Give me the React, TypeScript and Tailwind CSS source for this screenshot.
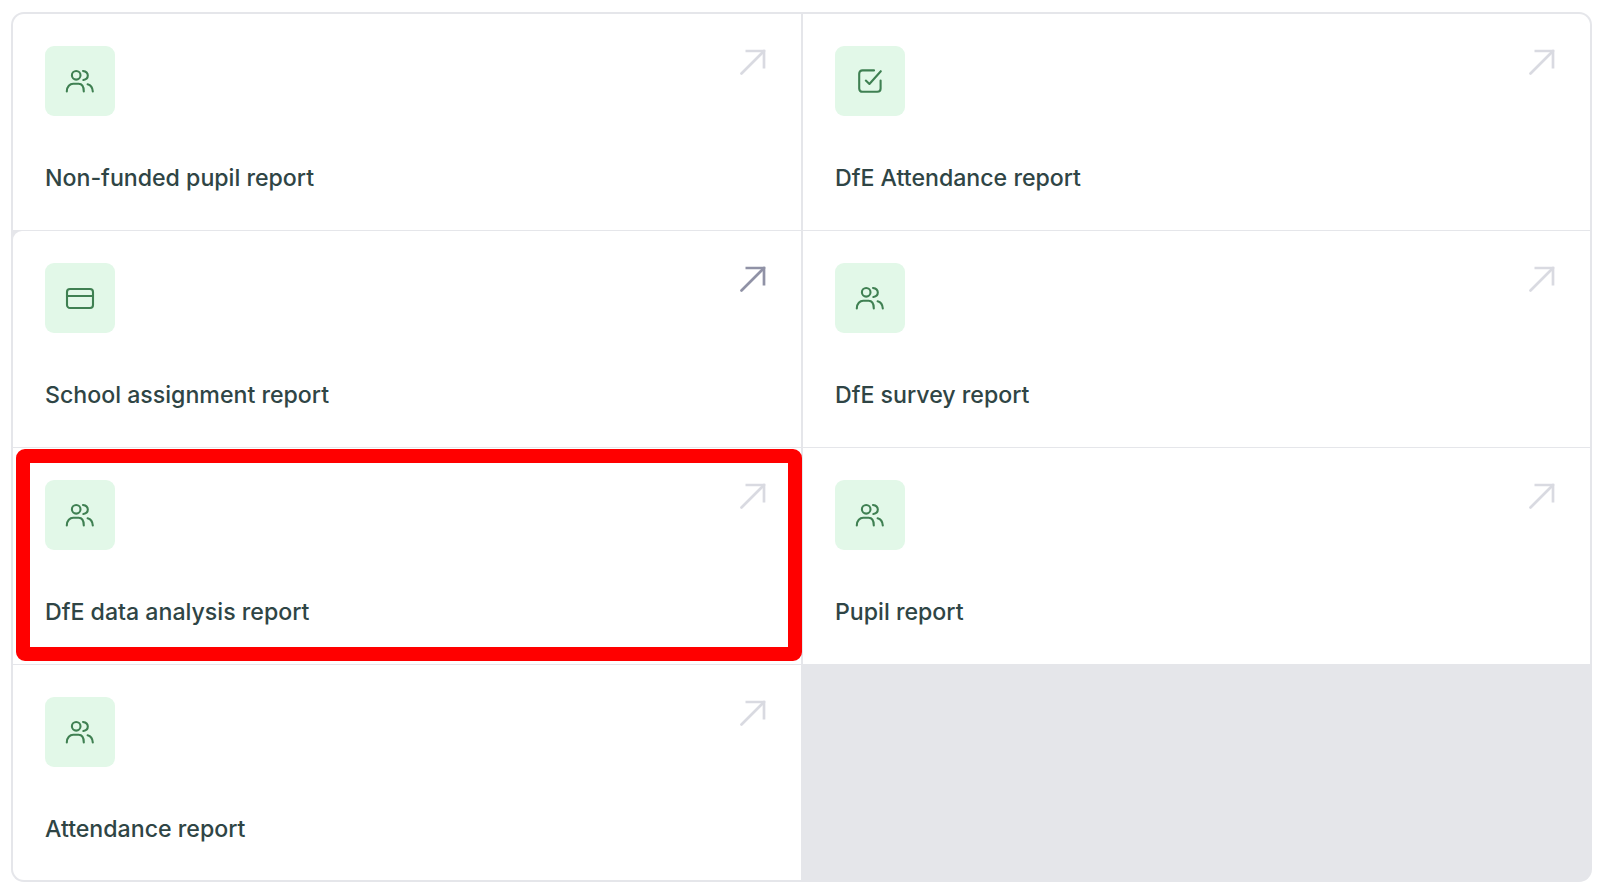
type IconName = "users" | "check" | "card";

type Report = {
  title: string;
  icon: IconName;
  hovered?: boolean;
  corner?: string;
  height?: string;
};

const REPORTS: Report[] = [
  { title: "Non-funded pupil report", icon: "users", corner: "rounded-tl-[11px]" },
  { title: "DfE Attendance report", icon: "check", corner: "rounded-tr-[11px]" },
  { title: "School assignment report", icon: "card", hovered: true, corner: "rounded-tl-[9px]" },
  { title: "DfE survey report", icon: "users" },
  { title: "DfE data analysis report", icon: "users" },
  { title: "Pupil report", icon: "users" },
  { title: "Attendance report", icon: "users", corner: "rounded-bl-[11px]", height: "h-[215px]" },
];

function ReportIcon({ name }: { name: IconName }) {
  return (
    <svg
      viewBox="0 0 30 30"
      fill="none"
      stroke="currentColor"
      strokeWidth="2.1"
      strokeLinecap="round"
      strokeLinejoin="round"
      className="h-[30px] w-[30px] text-[#3f8052]"
    >
      {name === "users" && (
        <>
          <circle cx="11.2" cy="9.3" r="4.3" />
          <path d="M1.8 25.5C1.8 20.4 5 17.8 8.2 17.8H13.6C16.6 17.8 18.8 20.4 18.8 25.5" />
          <path d="M18 5C21.2 5.4 22.8 7.4 22.8 9.6C22.8 11.8 21.2 13.6 18.4 14" />
          <path d="M22.6 18.2C25.6 19 27.6 21.6 27.8 25.5" />
        </>
      )}
      {name === "check" && (
        <>
          <path d="M25.6 14.5V22.5C25.6 24.6 24.4 25.8 22.3 25.8H7.5C5.4 25.8 4.2 24.6 4.2 22.5V7.7C4.2 5.6 5.4 4.4 7.5 4.4H19" />
          <path d="M10.8 14.6L14.4 18L25.8 5.2" />
        </>
      )}
      {name === "card" && (
        <>
          <rect x="2" y="6" width="26" height="19" rx="3" />
          <path d="M2 13H28" />
        </>
      )}
    </svg>
  );
}

function ArrowIcon({ hovered }: { hovered?: boolean }) {
  return (
    <svg
      viewBox="0 0 26 26"
      fill="none"
      stroke="currentColor"
      strokeWidth="2.7"
      className={`absolute right-[35px] top-[35px] h-[26px] w-[26px] ${hovered ? "text-[#9092a6]" : "text-[#d9dae1]"}`}
    >
      <path d="M1.5 24.5L24 2" strokeLinecap="round" />
      <path d="M5.5 2H24V19.5" />
    </svg>
  );
}

function ReportCard({ report }: { report: Report }) {
  return (
    <div
      className={`relative flex flex-col bg-white p-8 ${report.height ?? "h-[216px]"} ${report.corner ?? ""}`}
    >
      <div className="flex h-[70px] w-[70px] items-center justify-center rounded-[9px] bg-[#e2f8e8]">
        <ReportIcon name={report.icon} />
      </div>
      <h3 className="mt-[46px] text-[23.15px] leading-[32px] font-medium text-[#2f4545]">
        {report.title}
      </h3>
      <ArrowIcon hovered={report.hovered} />
    </div>
  );
}

export default function App() {
  return (
    <div className="relative h-[895px] w-[1600px] overflow-hidden bg-white pl-[11px] pt-[12px] font-['Inter',sans-serif]">
      <div className="grid w-[1581px] grid-cols-[788px_787px] gap-x-[2px] gap-y-px overflow-hidden rounded-[13px] bg-[#e5e6ea] p-[2px]">
        {REPORTS.map((report) => (
          <ReportCard key={report.title} report={report} />
        ))}
      </div>
      {/* annotation box drawn over the screenshot */}
      <div className="absolute left-[16px] top-[449px] h-[212px] w-[786px] rounded-[9px] border-[14px] border-[#ff0000]" />
    </div>
  );
}
